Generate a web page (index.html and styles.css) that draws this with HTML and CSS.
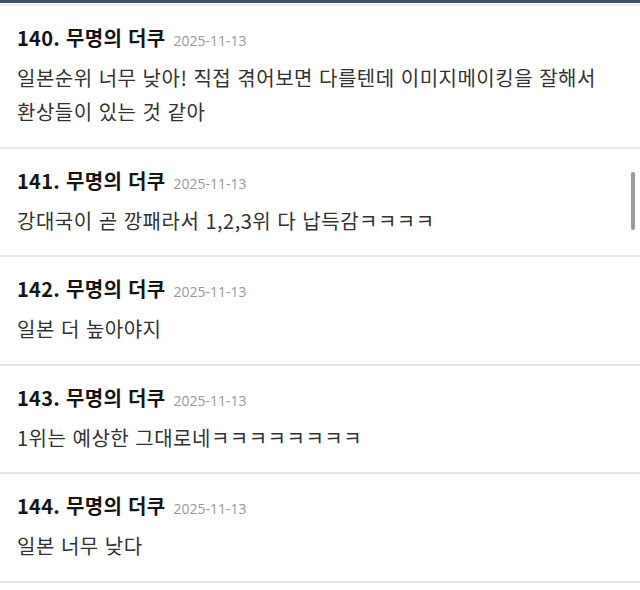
FILE: index.html
```html
<!DOCTYPE html>
<html lang="ko">
<head>
    <meta charset="UTF-8">
    <meta name="viewport" content="width=device-width, initial-scale=1.0">
    <title>댓글</title>
    <link rel="stylesheet" href="styles.css">
</head>
<body>
    <div class="topbar"></div>
    <div class="topline"></div>

    <ul class="comment-list">
        <li class="comment">
            <div class="comment-head">
                <span class="comment-author">140. 무명의 더쿠</span>
                <span class="comment-date">2025-11-13</span>
            </div>
            <p class="comment-text">일본순위 너무 낮아! 직접 겪어보면 다를텐데 이미지메이킹을 잘해서 환상들이 있는 것 같아</p>
        </li>
        <li class="comment">
            <div class="comment-head">
                <span class="comment-author">141. 무명의 더쿠</span>
                <span class="comment-date">2025-11-13</span>
            </div>
            <p class="comment-text">강대국이 곧 깡패라서 1,2,3위 다 납득감ㅋㅋㅋㅋ</p>
        </li>
        <li class="comment">
            <div class="comment-head">
                <span class="comment-author">142. 무명의 더쿠</span>
                <span class="comment-date">2025-11-13</span>
            </div>
            <p class="comment-text">일본 더 높아야지</p>
        </li>
        <li class="comment">
            <div class="comment-head">
                <span class="comment-author">143. 무명의 더쿠</span>
                <span class="comment-date">2025-11-13</span>
            </div>
            <p class="comment-text">1위는 예상한 그대로네ㅋㅋㅋㅋㅋㅋㅋㅋ</p>
        </li>
        <li class="comment">
            <div class="comment-head">
                <span class="comment-author">144. 무명의 더쿠</span>
                <span class="comment-date">2025-11-13</span>
            </div>
            <p class="comment-text">일본 너무 낮다</p>
        </li>
    </ul>

    <div class="scrollbar"></div>
</body>
</html>
```

FILE: styles.css
```css
:root {
    --color-bar: #3c5169;
    --color-line: #e6e6e6;
    --color-title: #151515;
    --color-text: #333333;
    --color-date: #9a9a9a;
}

body {
    margin: 0;
    padding: 0;
    background-color: #ffffff;
    font-family: 'Noto Sans CJK KR', 'Noto Sans', sans-serif;
    color: var(--color-text);
    overflow: hidden;
}

.topbar {
    height: 3px;
    background-color: var(--color-bar);
}

.topline {
    height: 2px;
    margin-top: 1px;
    background-color: #e8ebea;
}

.comment-list {
    list-style: none;
    margin: 0;
    padding: 0;
}

.comment {
    padding: 19px 17px 17.5px 17px;
    border-bottom: 2px solid var(--color-line);
}

.comment-head {
    display: flex;
    align-items: baseline;
    gap: 8px;
    height: 26px;
    line-height: 26px;
}

.comment-author {
    font-size: 20px;
    font-weight: bold;
    letter-spacing: 0.3px;
    color: var(--color-title);
}

.comment-date {
    font-family: 'Open Sans', 'Noto Sans', sans-serif;
    font-size: 14px;
    color: var(--color-date);
}

.comment-text {
    margin: 10px 0 0 0;
    font-size: 20px;
    letter-spacing: 0.5px;
    line-height: 34px;
    word-break: keep-all;
    color: var(--color-text);
}

.scrollbar {
    position: absolute;
    top: 172px;
    right: 5px;
    width: 4px;
    height: 58px;
    border-radius: 2px;
    background-color: #9c9c9c;
}
```
